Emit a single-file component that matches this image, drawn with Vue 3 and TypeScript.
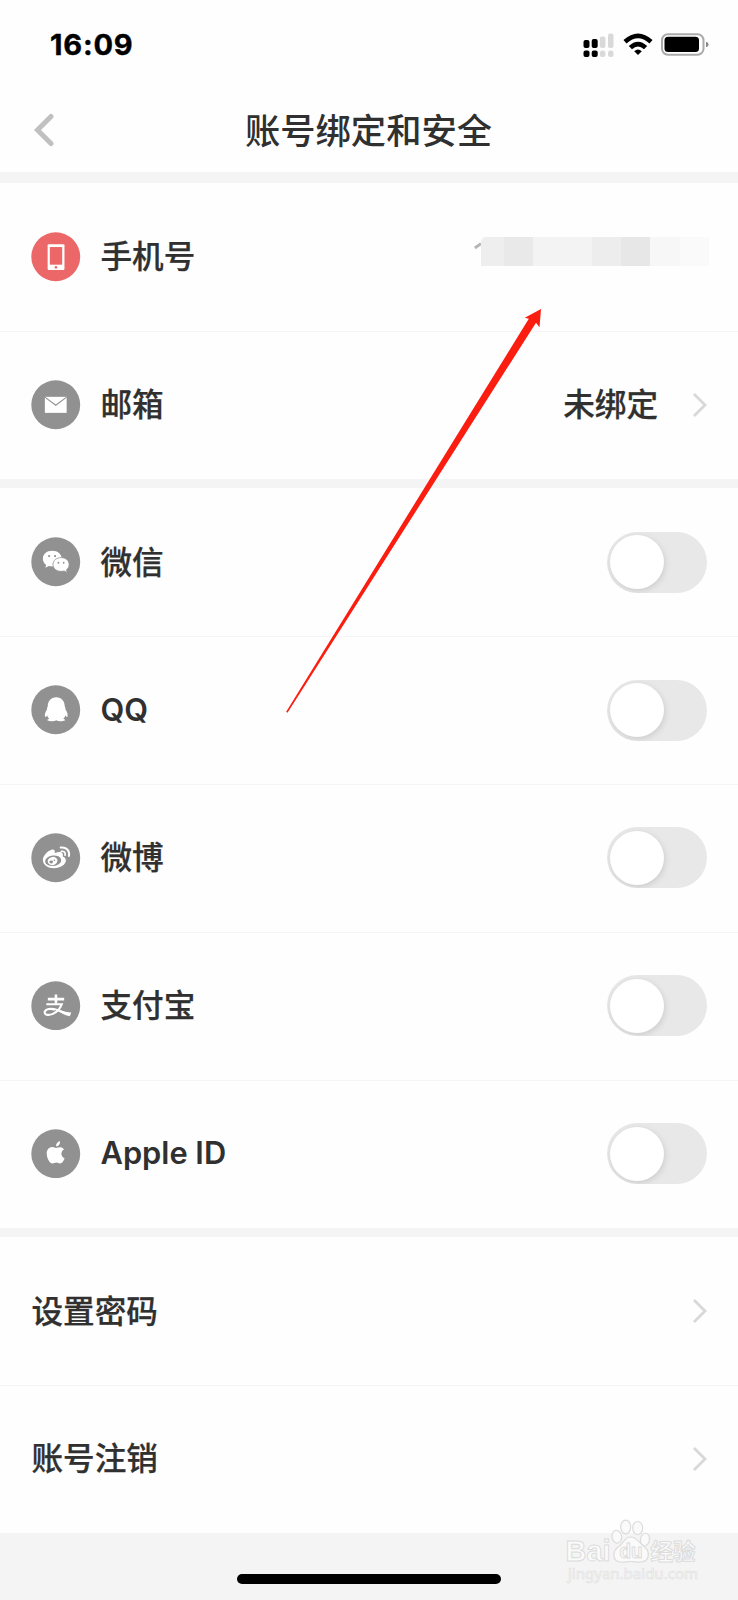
<script setup lang="ts">
interface Account {
  id: string
  label: string
}

const accounts: Account[] = [
  { id: 'wechat', label: '微信' },
  { id: 'qq', label: 'QQ' },
  { id: 'weibo', label: '微博' },
  { id: 'alipay', label: '支付宝' },
  { id: 'apple', label: 'Apple ID' },
]

const links: string[] = ['设置密码', '账号注销']
</script>

<template>
  <div class="screen">
    <div class="status">
      <span class="time">16:09</span>
      <svg class="status-icons" width="130" height="30" viewBox="0 0 130 30">
        <g fill="#000">
          <rect x="1.500" y="9" width="6" height="8" rx="2" />
          <rect x="9.700" y="8" width="6" height="9" rx="2" />
          <rect x="1.500" y="19.500" width="6" height="6.500" rx="2" />
          <rect x="9.700" y="19.500" width="6" height="6.500" rx="2" />
        </g>
        <g fill="#d9d9d9">
          <rect x="17.900" y="5.500" width="5.500" height="11.500" rx="2" />
          <rect x="26" y="2.500" width="5.500" height="14.500" rx="2" />
          <rect x="17.900" y="19.500" width="5.500" height="6.500" rx="2.500" />
          <rect x="26" y="19.500" width="5.500" height="6.500" rx="2.500" />
        </g>
        <g fill="none" stroke="#000" stroke-width="4.600">
          <path d="M43 10.800Q56 -1 69 10.800" />
          <path d="M48.400 16.700Q56 9.500 63.600 16.700" />
        </g>
        <path d="M52.200 20.200Q56 17 59.800 20.200L56 24Z" fill="#000" />
        <rect x="80" y="3.200" width="41.500" height="20.500" rx="6" fill="#fff" stroke="#aaa" stroke-width="2" />
        <rect x="82.500" y="5.800" width="34.500" height="15.300" rx="3.600" fill="#000" />
        <path d="M124 10.700Q126.600 11.500 126.600 13.500T124 16.300Z" fill="#888" />
      </svg>
    </div>

    <header class="header">
      <svg class="back" width="22" height="34" viewBox="0 0 22 34">
        <path d="M19 3.500L5.500 17 19 30.500" fill="none" stroke="#c0c0c0" stroke-width="5" stroke-linecap="round" stroke-linejoin="miter" />
      </svg>
      <h1 class="title">账号绑定和安全</h1>
    </header>

    <section class="group">
      <div class="row">
        <svg class="icon" viewBox="0 0 50 50">
          <circle cx="25" cy="25" r="24.700" fill="#ec6768" />
          <rect x="16.800" y="12.300" width="17" height="26" rx="1.200" fill="#fff" />
          <rect x="19" y="15.200" width="12.500" height="17.800" fill="#ec6768" />
          <circle cx="25.200" cy="35.700" r="1.300" fill="#ec6768" />
        </svg>
        <span class="label">手机号</span>
        <div class="masked">
          <svg class="digit" width="8" height="22" viewBox="0 0 8 22">
            <path d="M.8 8L7 3.600" fill="none" stroke="#b5b5b5" stroke-width="3" />
          </svg>
          <div class="mosaic">
            <i class="tile t1"></i><i class="tile t2"></i><i class="tile t3"></i><i class="tile t4"></i>
            <i class="tile t5"></i><i class="tile t6"></i><i class="tile t7"></i>
          </div>
        </div>
      </div>
      <div class="row">
        <svg class="icon" viewBox="0 0 50 50">
          <circle cx="25" cy="25" r="24.700" fill="#919191" />
          <rect x="14" y="17" width="22" height="16.200" fill="#fff" />
          <path d="M14 17.300l11 8.200 11-8.200" fill="none" stroke="#919191" stroke-width="1.100" />
        </svg>
        <span class="label">邮箱</span>
        <span class="value">未绑定</span>
        <svg class="chevron" width="16" height="26" viewBox="0 0 16 26">
          <path d="M2 2l11 11L2 24" fill="none" stroke="#d8d8d8" stroke-width="2.800" />
        </svg>
      </div>
    </section>

    <section class="group">
      <div v-for="account in accounts" :key="account.id" class="row">
        <svg class="icon" viewBox="0 0 50 50">
          <circle cx="25" cy="25" r="24.700" fill="#919191" />
          <g v-if="account.id === 'wechat'">
            <path d="M21.500 14C15.800 14 12 17.600 12 22c0 2.600 1.300 4.800 3.300 6.200L14.500 31l3.600-1.800c1 .3 2.200.5 3.400.5 5.500 0 9.500-3.400 9.500-7.700 0-4.500-4-8-9.500-8z" fill="#fff" />
            <path d="M30.500 20.800c-4.800 0-8.300 3-8.300 6.900s3.500 7 8.300 7c1.100 0 2-.2 2.900-.4l3.200 1.500-.8-2.600c1.800-1.300 2.700-3.300 2.700-5.500 0-3.900-3.600-6.900-8-6.900z" fill="#fff" stroke="#919191" stroke-width=".8" />
            <g fill="#919191">
              <circle cx="18.300" cy="19.300" r="1.100" /><circle cx="24.300" cy="19.300" r="1.100" />
              <circle cx="27.700" cy="26" r=".9" /><circle cx="33" cy="26" r=".9" />
            </g>
          </g>
          <path
            v-else-if="account.id === 'qq'"
            d="M25.500 12.300c-5.400 0-8.600 4-8.600 9.300-.7 1-.8 2-.6 2.900-1.600 2.300-2.600 4.900-2.200 7.200.2 1.100 1.200.5 2.300-.8.300 1.300.9 2.300 2 3.300-3 1-2.500 2.300 1.800 2.300 2.400 0 4-.4 5.300-1 1.300.6 2.900 1 5.300 1 4.300 0 4.800-1.300 1.800-2.300 1.100-1 1.700-2 2-3.300 1.100 1.300 2.100 1.900 2.300.8.400-2.300-.6-4.900-2.200-7.200.2-.9.100-1.900-.6-2.900 0-5.300-3.200-9.300-8.600-9.300z"
            fill="#fff"
          />
          <g v-else-if="account.id === 'weibo'">
            <path d="M24 19.300c.6-3-2-3.400-5-1.700-3.800 2.100-7 6-7 9.600 0 5.100 5.300 8.300 11 8.300 7 0 12.200-3.900 12.200-7.800 0-2.200-1.600-3.400-3.200-3.900.9-3.400-.8-5-4-4.500-1.600.2-2.800.7-4 1z" fill="#fff" />
            <ellipse cx="22.400" cy="28" rx="8.200" ry="5.300" transform="rotate(-7 22.400 28)" fill="#919191" />
            <ellipse cx="21.800" cy="28.300" rx="5" ry="4.100" transform="rotate(-18 21.800 28.300)" fill="#fff" />
            <ellipse cx="20.400" cy="29.200" rx="1.900" ry="1.500" fill="#919191" />
            <circle cx="23.600" cy="27.600" r=".8" fill="#919191" />
            <g fill="none" stroke="#fff" stroke-linecap="round">
              <path d="M30 14.700c5.500-.8 9.500 3 8.300 8.600" stroke-width="2" />
              <path d="M30.700 18.500c2.800-.4 4.400 1.200 3.700 3.900" stroke-width="1.700" />
            </g>
          </g>
          <g v-else-if="account.id === 'alipay'" fill="none" stroke="#fff">
            <path d="M17 18.300h16.500M25.200 13.600v9.200" stroke-width="2.600" />
            <path d="M15.500 23.400h15.600c-1.700 4.600-5 8.100-9 9.800-4 1.700-8.200 1.400-8.300-1.400-.1-3.300 5-4.700 10.200-2.800" stroke-width="2.100" />
            <path d="M21 27c5 0 12 4.600 19.700 4.800l-1.500 3.800c-5.400-.4-9.700-4.800-16-6.500z" fill="#fff" stroke="none" />
          </g>
          <g v-else fill="#fff">
            <path d="M25.500 19.300c-1.400-.2-2.600-1.200-4.200-1.100-3.600.2-5.600 3.200-5.400 7 .2 4.600 3.100 9.600 5.700 9.600 1.500 0 2.200-.9 3.900-.9s2.400.9 3.900.9c2 0 3.700-3 4.500-5.300-3.900-1.700-4.400-7-.5-8.900-2.300-3.200-5.600-2.300-7.900-1.300z" />
            <path d="M25.300 17.600c-.2-2.600 1.600-4.900 4-5.200.3 2.700-1.500 5-4 5.200z" />
          </g>
        </svg>
        <span class="label" :class="{ latin: account.id === 'qq' || account.id === 'apple' }">{{ account.label }}</span>
        <span class="switch"><span class="knob"></span></span>
      </div>
    </section>

    <section class="group">
      <div v-for="link in links" :key="link" class="row">
        <span class="label first">{{ link }}</span>
        <svg class="chevron" width="16" height="26" viewBox="0 0 16 26">
          <path d="M2 2l11 11L2 24" fill="none" stroke="#d8d8d8" stroke-width="2.800" />
        </svg>
      </div>
    </section>

    <div class="home-bar"></div>

    <svg class="arrow" width="260" height="408" viewBox="0 0 260 408">
      <path d="M255 0L238.800 8.700l4 1L.2 402.800l1.300.9L250 13.800l3.500 4.400z" fill="#fb1d10" />
    </svg>

    <svg class="watermark" width="140" height="72" viewBox="0 0 140 72">
      <g fill="#fafafa" stroke="#dcdcdc" stroke-width="1.200">
        <ellipse cx="53.800" cy="18.700" rx="4.800" ry="6.400" transform="rotate(-8 53.800 18.700)" />
        <ellipse cx="62.700" cy="9" rx="5" ry="6.900" />
        <ellipse cx="74.700" cy="10" rx="5" ry="6.500" />
        <ellipse cx="82" cy="21.500" rx="4.500" ry="6.300" transform="rotate(8 82 21.500)" />
        <path d="M67.500 19c-5.500 0-6.500 5.500-11 9-8 5-7.500 15.500 1.500 16 4 .3 5-.5 9.500-.5s6.500.8 10.500.5c9-.5 9.500-11 2.500-16-5-3.500-6.500-9-13-9z" />
      </g>
      <g class="brand">
        <text x="2.500" y="42.500" font-size="30" textLength="45" lengthAdjust="spacingAndGlyphs">Bai</text>
        <text x="56.500" y="40" font-size="20" textLength="23" lengthAdjust="spacingAndGlyphs">du</text>
        <text x="87.500" y="41.500" font-size="22.500">经验</text>
      </g>
      <text class="domain" x="5" y="60.500" textLength="130" lengthAdjust="spacingAndGlyphs">jingyan.baidu.com</text>
    </svg>
  </div>
</template>

<style>
body {
  margin: 0;
  background: #f5f5f5;
}
</style>

<style scoped>
.screen {
  position: relative;
  width: 738px;
  height: 1600px;
  overflow: hidden;
  background: #f4f4f4;
  color: #303030;
  font-family: "Noto Sans CJK SC", sans-serif;
}

.status {
  display: flex;
  align-items: center;
  justify-content: space-between;
  box-sizing: border-box;
  height: 88px;
  padding: 0 26px 0 50px;
  background: #fefefe;
}

.time {
  margin-top: 1px;
  color: #000;
  font: 700 29px/30px Inter, sans-serif;
  letter-spacing: 0.800px;
  -webkit-text-stroke: 0.400px #000;
}

.status-icons {
  display: block;
  margin-top: 3px;
}

.header {
  display: grid;
  grid-template-columns: 50px 1fr 50px;
  align-items: center;
  height: 84px;
  padding: 0 32px;
  background: #fefefe;
}

.title {
  margin: -3px 0 0 -1px;
  font-size: 35.300px;
  font-weight: 500;
  line-height: 52px;
  text-align: center;
}

.group {
  margin-top: 9.600px;
  background: #fefefe;
}

.header + .group {
  margin-top: 11px;
}

.row {
  display: flex;
  align-items: center;
  box-sizing: border-box;
  height: 147.850px;
  padding: 0 31px;
}

.row + .row {
  box-shadow: inset 0 1px #f5f5f5;
}

.icon {
  width: 49.500px;
  height: 49.500px;
}

.label {
  margin: -5px 0 0 20px;
  font-size: 31.600px;
  font-weight: 500;
  line-height: 46px;
  -webkit-text-stroke: 0.250px #303030;
}

.label.first {
  margin-left: 0.500px;
}

.label.latin {
  margin-top: -1px;
  font-family: Inter, sans-serif;
  font-size: 30.800px;
  font-weight: 600;
  -webkit-text-stroke: 0;
}

.value {
  margin: -5px 34px 0 auto;
  font-size: 31.600px;
  font-weight: 500;
  line-height: 46px;
  -webkit-text-stroke: 0.250px #303030;
}

.chevron {
  margin-right: -1px;
}

.label + .chevron {
  margin-left: auto;
}

.masked {
  display: flex;
  align-items: center;
  margin: -11px -2px 0 auto;
}

.mosaic {
  display: flex;
  height: 29.500px;
}

.digit {
  margin-right: -1px;
}

.tile {
  width: 29.300px;
}

.t1 { width: 23px; background: #eee; border-top-left-radius: 5px; }
.t2 { background: #e9e9e9; }
.t3 { width: 59px; background: #f3f3f3; }
.t4 { background: #ededed; }
.t5 { background: #e7e7e7; }
.t6 { background: #f7f7f7; }
.t7 { background: #fafafa; }

.switch {
  box-sizing: border-box;
  width: 100.500px;
  height: 61px;
  margin-left: auto;
  padding: 3.500px;
  border-radius: 31px;
  background: #e8e8e8;
  overflow: hidden;
}

.knob {
  display: block;
  width: 54px;
  height: 54px;
  border-radius: 50%;
  background: #fff;
  box-shadow: 1px 2px 6px rgba(0, 0, 0, 0.12);
}

.home-bar {
  width: 264px;
  height: 10px;
  margin: 41px auto 0;
  border-radius: 5px;
  background: #000;
}

.arrow {
  position: absolute;
  left: 286px;
  top: 309px;
}

.watermark {
  position: absolute;
  left: 563px;
  top: 1518px;
}

.brand {
  fill: #fafafa;
  stroke: #dcdcdc;
  stroke-width: 1px;
  font-family: "Liberation Sans", "Noto Sans CJK SC", sans-serif;
  font-weight: 700;
}

.domain {
  fill: #fafafa;
  stroke: #e0e0e0;
  stroke-width: 0.600px;
  font: 14.500px "Noto Sans", sans-serif;
}
</style>
